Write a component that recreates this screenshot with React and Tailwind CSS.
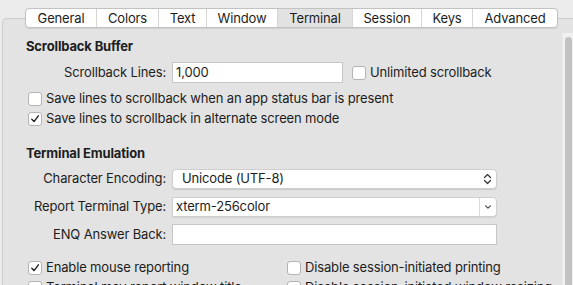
import React from 'react';

const tabs = [
  { name: 'General', w: 'w-[70px]' },
  { name: 'Colors', w: 'w-[62px]' },
  { name: 'Text', w: 'w-[48px]' },
  { name: 'Window', w: 'w-[71px]' },
  { name: 'Terminal', w: 'w-[75px]', active: true },
  { name: 'Session', w: 'w-[69px]' },
  { name: 'Keys', w: 'w-[51px]' },
  { name: 'Advanced', w: 'w-[85px]' },
];

const Check = ({ checked, label }) => (
  <label className="flex items-center h-[20px] gap-[4px] whitespace-nowrap">
    <span className="w-[14px] h-[14px] rounded-[3px] border border-[#b4b4b4] bg-white flex items-center justify-center shrink-0">
      {checked && (
        <svg width="10" height="10" viewBox="0 0 10 10" fill="none">
          <path d="M1.8 5.3 L4 7.6 L8.4 1.8" stroke="#222" strokeWidth="1.4" strokeLinecap="round" strokeLinejoin="round" />
        </svg>
      )}
    </span>
    <span>{label}</span>
  </label>
);

const Row = ({ label, children }) => (
  <div className="flex items-center">
    <div className="w-[146px] text-right pr-[6px] shrink-0 whitespace-nowrap">{label}</div>
    {children}
  </div>
);

export default function App() {
  return (
    <div className="w-[573px] h-[285px] overflow-hidden bg-[#ececec] pt-[8px] text-[13px] tracking-[-0.15px] text-[#1d1d1d]" style={{ fontFamily: 'Inter, "Liberation Sans", sans-serif' }}>
      {/* tab bar */}
      <div className="relative z-10 ml-[25px] flex h-[20px] w-max rounded-[4px] border border-[#c2c2c2] bg-white shadow-[0_0.5px_1px_rgba(0,0,0,0.08)] overflow-hidden">
        {tabs.map((t, i) => (
          <div
            key={t.name}
            className={`${t.w} flex items-center justify-center leading-none ${i > 0 ? 'border-l border-[#d6d6d6]' : ''} ${t.active ? 'bg-[#e2e2e2]' : ''}`}
          >
            {t.name}
          </div>
        ))}
      </div>

      {/* panel */}
      <div className="-mt-[10px] ml-[2px] h-[300px] rounded-tl-[5px] border-t border-l border-[#cbcbcb] bg-[#e3e3e3] flex">
        <div className="flex-1 pl-[23px] pt-[19px]">
          <div className="font-bold h-[16px] leading-[16px]">Scrollback Buffer</div>

          <div className="mt-[8px]">
            <Row label="Scrollback Lines:">
              <div className="w-[171px] h-[21px] bg-white border border-[#c6c6c6] flex items-center pl-[3px]">1,000</div>
              <div className="ml-[9px]">
                <Check label="Unlimited scrollback" />
              </div>
            </Row>
          </div>

          <div className="mt-[6px] pl-[2px]">
            <Check label="Save lines to scrollback when an app status bar is present" />
            <Check checked label="Save lines to scrollback in alternate screen mode" />
          </div>

          <div className="mt-[16px] font-bold h-[16px] leading-[16px]">Terminal Emulation</div>

          <div className="mt-[8px] flex flex-col gap-[8px]">
            <Row label="Character Encoding:">
              <div className="w-[325px] h-[20px] bg-white rounded-[4px] border border-[#cfcfcf] shadow-[0_1px_1px_rgba(0,0,0,0.12)] flex items-center justify-between pl-[9px] pr-[4px]">
                <span>Unicode (UTF-8)</span>
                <svg width="9" height="12" viewBox="0 0 9 12" fill="none">
                  <path d="M1.5 4.5 L4.5 1.5 L7.5 4.5 M1.5 7.5 L4.5 10.5 L7.5 7.5" stroke="#333" strokeWidth="1.2" strokeLinecap="round" strokeLinejoin="round" />
                </svg>
              </div>
            </Row>
            <Row label="Report Terminal Type:">
              <div className="w-[325px] h-[20px] bg-white rounded-r-[4px] border border-[#cfcfcf] shadow-[0_1px_1px_rgba(0,0,0,0.08)] flex items-center">
                <span className="flex-1 pl-[3px]">xterm-256color</span>
                <div className="w-[17px] h-full border-l border-[#dcdcdc] flex items-center justify-center">
                  <svg width="8" height="6" viewBox="0 0 8 6" fill="none">
                    <path d="M1.5 1.8 L4 4.2 L6.5 1.8" stroke="#444" strokeWidth="1.1" strokeLinecap="round" strokeLinejoin="round" />
                  </svg>
                </div>
              </div>
            </Row>
          </div>
          <div className="mt-[7px]">
            <Row label="ENQ Answer Back:">
              <div className="w-[325px] h-[21px] bg-white border border-[#c6c6c6]"></div>
            </Row>
          </div>

          <div className="mt-[13px] pl-[2px] grid grid-cols-[259px_1fr]">
            <Check checked label="Enable mouse reporting" />
            <Check label="Disable session-initiated printing" />
            <Check label="Terminal may report window title" />
            <Check label="Disable session-initiated window resizing" />
          </div>
        </div>

        {/* scrollbar */}
        <div className="w-[11px] mt-[14px] bg-[#f1f1f1] border-l border-[#e8e8e8] pl-[2px] pr-[1px] pt-[4px]">
          <div className="h-full w-[7px] rounded-full bg-[#c2c2c2]"></div>
        </div>
      </div>
    </div>
  );
}
